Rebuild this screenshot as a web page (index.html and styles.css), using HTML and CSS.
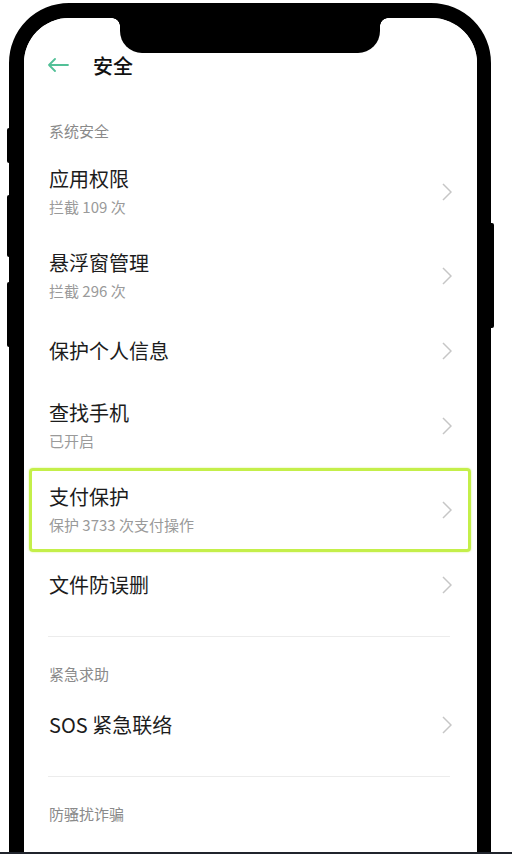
FILE: index.html
```html
<!DOCTYPE html>
<html lang="zh-CN">
<head>
  <meta charset="UTF-8" />
  <meta name="viewport" content="width=device-width, initial-scale=1.0" />
  <title>安全</title>
  <link rel="stylesheet" href="styles.css">
</head>
<body>
  <div class="phone">
    <span class="key key-1"></span>
    <span class="key key-2"></span>
    <span class="key key-3"></span>
    <span class="key key-power"></span>

    <div class="screen">
      <div class="notch"></div>

      <div class="header">
        <svg class="back" width="22" height="14" viewBox="0 0 22 14">
          <path d="M21 7H2M8 1L2 7l6 6" fill="none" stroke="#52c097" stroke-width="1.8" stroke-linecap="round" stroke-linejoin="round"/>
        </svg>
        <div class="title">安全</div>
      </div>

      <div class="group-title">系统安全</div>

      <div class="row">
        <div class="text">
          <div class="name">应用权限</div>
          <div class="sub">拦截 109 次</div>
        </div>
        <svg class="chev" width="10" height="18" viewBox="0 0 10 18"><path d="M1 1l8 8-8 8" fill="none" stroke="#c6c6c6" stroke-width="1.5"/></svg>
      </div>

      <div class="row">
        <div class="text">
          <div class="name">悬浮窗管理</div>
          <div class="sub">拦截 296 次</div>
        </div>
        <svg class="chev" width="10" height="18" viewBox="0 0 10 18"><path d="M1 1l8 8-8 8" fill="none" stroke="#c6c6c6" stroke-width="1.5"/></svg>
      </div>

      <div class="row single">
        <div class="text">
          <div class="name">保护个人信息</div>
        </div>
        <svg class="chev" width="10" height="18" viewBox="0 0 10 18"><path d="M1 1l8 8-8 8" fill="none" stroke="#c6c6c6" stroke-width="1.5"/></svg>
      </div>

      <div class="row">
        <div class="text">
          <div class="name">查找手机</div>
          <div class="sub">已开启</div>
        </div>
        <svg class="chev" width="10" height="18" viewBox="0 0 10 18"><path d="M1 1l8 8-8 8" fill="none" stroke="#c6c6c6" stroke-width="1.5"/></svg>
      </div>

      <div class="row marked">
        <div class="text">
          <div class="name">支付保护</div>
          <div class="sub">保护 3733 次支付操作</div>
        </div>
        <svg class="chev" width="10" height="18" viewBox="0 0 10 18"><path d="M1 1l8 8-8 8" fill="none" stroke="#c6c6c6" stroke-width="1.5"/></svg>
      </div>

      <div class="row single">
        <div class="text">
          <div class="name">文件防误删</div>
        </div>
        <svg class="chev" width="10" height="18" viewBox="0 0 10 18"><path d="M1 1l8 8-8 8" fill="none" stroke="#c6c6c6" stroke-width="1.5"/></svg>
      </div>

      <div class="divider"></div>
      <div class="group-title">紧急求助</div>

      <div class="row single">
        <div class="text">
          <div class="name">SOS 紧急联络</div>
        </div>
        <svg class="chev" width="10" height="18" viewBox="0 0 10 18"><path d="M1 1l8 8-8 8" fill="none" stroke="#c6c6c6" stroke-width="1.5"/></svg>
      </div>

      <div class="divider"></div>
      <div class="group-title">防骚扰诈骗</div>
    </div>
  </div>

  <div class="bottom-bar"></div>
</body>
</html>
```

FILE: styles.css
```css
body {
  margin: 0;
  padding: 0;
  background: #fff;
  font-family: "Noto Sans CJK SC", "Noto Sans", sans-serif;
  color: #1c1c1c;
  overflow: hidden;
  height: 854px;
}
.phone {
  position: relative;
  margin: 3px 0 0 9px;
  width: 453px;
  border: solid #000;
  border-width: 15px 14px 15px 15px;
  border-radius: 60px;
}
.key {
  position: absolute;
  left: -17px;
  width: 5px;
  background: #000;
  border-radius: 2px;
}
.key-1 { top: 110px; height: 35px; }
.key-2 { top: 177px; height: 62px; }
.key-3 { top: 264px; height: 65px; }
.key-power {
  left: auto;
  right: -17px;
  top: 205px;
  height: 105px;
}
.screen {
  position: relative;
  height: 900px;
  border-radius: 45px 45px 0 0;
  overflow: hidden;
  background: #fff;
  padding-top: 24px;
  box-sizing: border-box;
}
.notch {
  position: absolute;
  top: 0;
  left: 96px;
  width: 260px;
  height: 35px;
  background: #000;
  border-radius: 0 0 22px 22px;
}
.notch::before,
.notch::after {
  content: "";
  position: absolute;
  top: 0;
  width: 8px;
  height: 8px;
}
.notch::before {
  left: -8px;
  background: radial-gradient(circle at 0 100%, transparent 7.5px, #000 8px);
}
.notch::after {
  right: -8px;
  background: radial-gradient(circle at 100% 100%, transparent 7.5px, #000 8px);
}
.header {
  display: flex;
  align-items: center;
  height: 46px;
  padding-left: 23px;
  gap: 24px;
}
.title {
  font-size: 20px;
  font-weight: 500;
  color: #111;
}
.group-title {
  padding: 33px 25px 9px;
  font-size: 15px;
  line-height: 20px;
  color: #8a8a8a;
}
.divider + .group-title {
  padding-top: 27px;
  padding-bottom: 8px;
}
.row {
  display: flex;
  align-items: center;
  justify-content: space-between;
  padding: 16px 25px 17px;
}
.row.single {
  height: 66px;
  padding-top: 0;
  padding-bottom: 0;
  box-sizing: border-box;
}
.name {
  font-size: 20px;
  line-height: 26px;
  color: #1c1c1c;
}
.sub {
  margin-top: 5px;
  font-size: 15px;
  line-height: 20px;
  color: #9a9a9a;
}
.row.marked {
  margin: 0 6px 0 5px;
  padding: 13px 16px 14px 17px;
  border: 3px solid #c4ef4a;
  border-radius: 4px;
  box-shadow: 0 0 2px rgba(190, 235, 70, 0.7);
}
.chev {
  flex: none;
}
.divider {
  height: 1px;
  margin: 18px 27px 0 24px;
  background: #ececec;
}
.bottom-bar {
  position: fixed;
  left: 0;
  right: 0;
  bottom: 0;
  height: 2px;
  background: #20242c;
}
```
